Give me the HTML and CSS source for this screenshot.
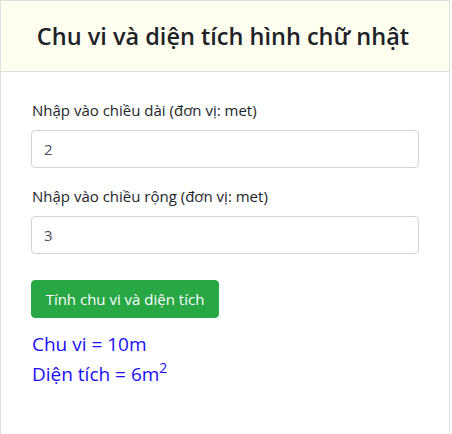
FILE: index.html
```html
<!DOCTYPE html>
<html lang="vi">
<head>
<meta charset="utf-8">
<title>Chu vi và diện tích hình chữ nhật</title>
<link rel="stylesheet" href="styles.css">
</head>
<body>
<div class="card">
  <div class="card-header">
    <h3 class="title">Chu vi và diện tích hình chữ nhật</h3>
  </div>
  <div class="card-body">
    <div class="form-group">
      <label class="label" for="dai">Nhập vào chiều dài (đơn vị: met)</label>
      <input class="input" id="dai" type="text" value="2">
    </div>
    <div class="form-group">
      <label class="label" for="rong">Nhập vào chiều rộng (đơn vị: met)</label>
      <input class="input" id="rong" type="text" value="3">
    </div>
    <button class="btn" type="button">Tính chu vi và diện tích</button>
    <div class="result">
      <p class="result-line">Chu vi = 10m</p>
      <p class="result-line">Diện tích = 6m<sup class="sup">2</sup></p>
    </div>
  </div>
</div>
</body>
</html>
```
FILE: styles.css
```css
* { box-sizing: border-box; }
html, body {
  margin: 0;
  padding: 0;
  background: #fff;
}
body {
  font-family: "Open Sans", "Noto Sans", sans-serif;
  font-size: 15px;
  line-height: 24px;
  color: #212529;
}
.card {
  width: 450px;
  height: 434px;
  border: 1px solid #dfdfdf;
  border-bottom: none;
  display: flex;
  flex-direction: column;
}
.card-header {
  height: 71px;
  background: #fffff0;
  border-bottom: 1px solid #dfdfdf;
  display: flex;
  align-items: center;
  justify-content: center;
}
.title {
  margin: 0;
  font-size: 23.5px;
  font-weight: 600;
  line-height: 30px;
  color: #1e2229;
  padding-right: 4px;
}
.card-body {
  padding: 26px 30px 0 30px;
}
.form-group {
  margin-bottom: 16px;
}
.label {
  display: block;
  margin-bottom: 8px;
  padding-left: 1px;
}
.input {
  display: block;
  width: 100%;
  height: 38px;
  padding: 6px 12px;
  font-family: inherit;
  font-size: 15px;
  line-height: 24px;
  color: #495057;
  background: #fff;
  border: 1px solid #ced4da;
  border-radius: 4px;
}
.btn {
  display: block;
  margin-top: 26px;
  height: 38px;
  width: 188px;
  padding: 6px 12px;
  font-family: inherit;
  font-size: 15px;
  line-height: 24px;
  color: #fff;
  background: #28a745;
  border: 1px solid #28a745;
  border-radius: 4px;
}
.result {
  margin-top: 11px;
  color: #1a0dff;
  font-size: 19px;
  line-height: 30px;
}
.result-line {
  margin: 0;
  padding-left: 1px;
}
.sup {
  font-size: 14px;
  line-height: 0;
  vertical-align: 8px;
}
```
